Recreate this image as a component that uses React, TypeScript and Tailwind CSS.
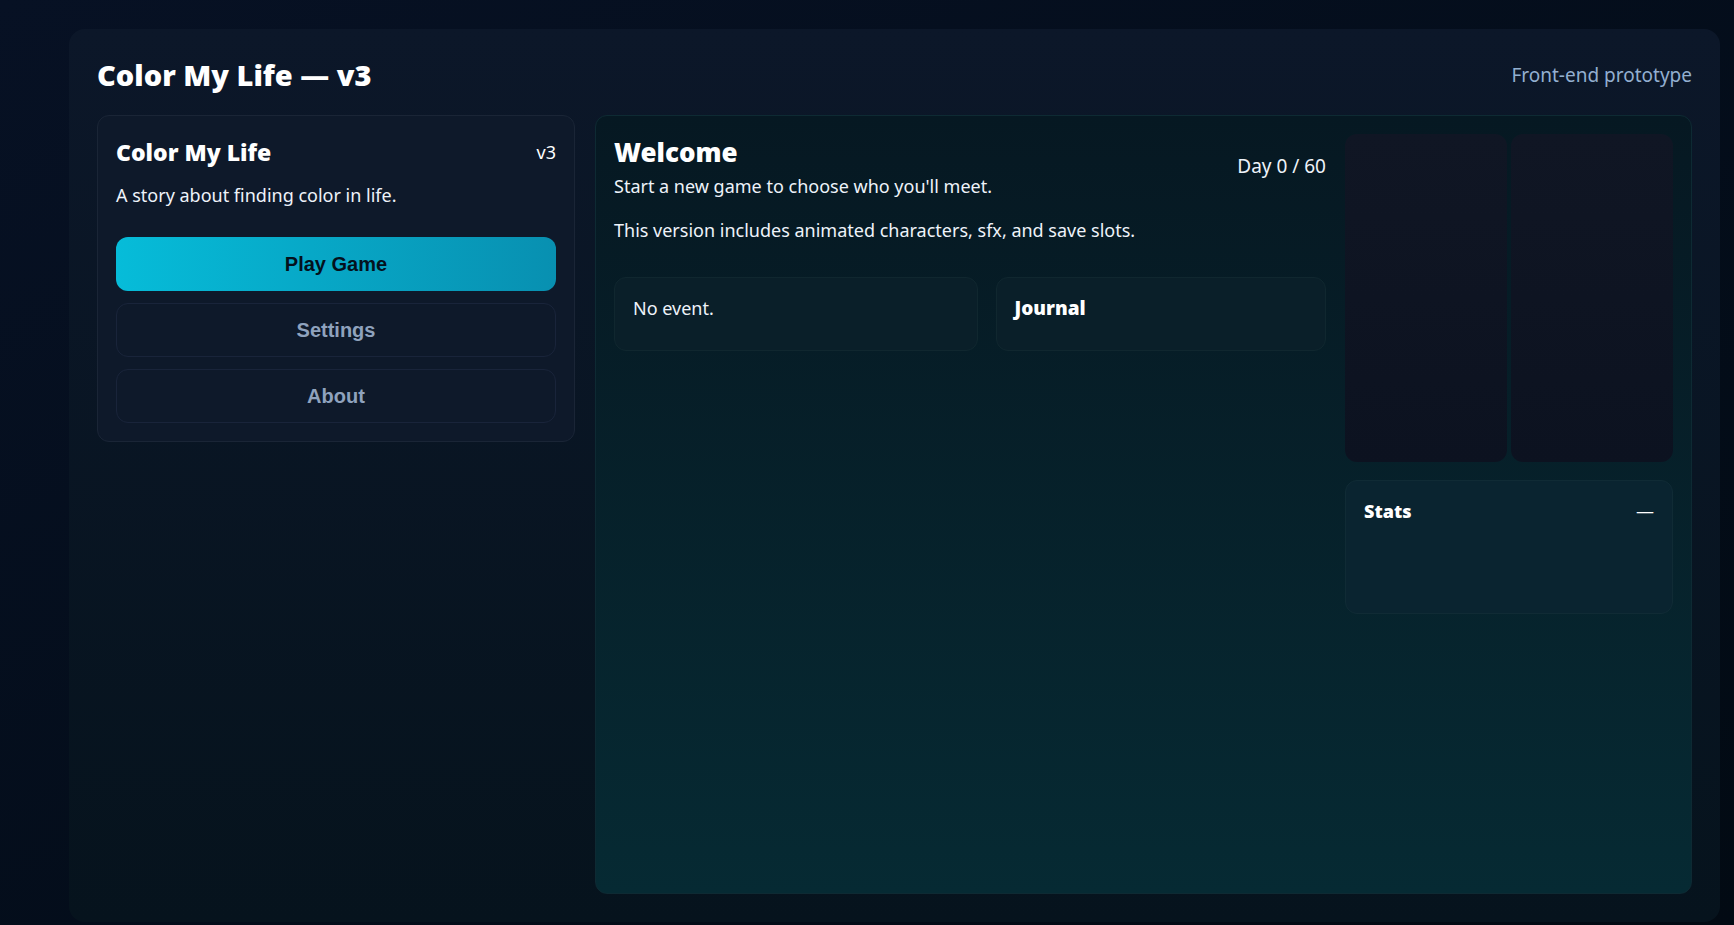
const sans = "font-['Segoe_UI','Noto_Sans',sans-serif]";
const btnFont = "font-['Liberation_Sans',Arial,sans-serif]";

function MenuButton({ label, primary }: { label: string; primary?: boolean }) {
  if (primary) {
    return (
      <button
        className={`${btnFont} h-[54px] w-full rounded-xl bg-linear-to-r from-[#06bcd9] to-[#0890b1] text-xl font-bold text-[#04111d]`}
      >
        {label}
      </button>
    );
  }
  return (
    <button
      className={`${btnFont} h-[54px] w-full rounded-xl border border-[#19243a] bg-transparent text-xl font-bold text-[#8fa2bd]`}
    >
      {label}
    </button>
  );
}

function MenuCard() {
  return (
    <div className="rounded-xl border border-[#1a2536] bg-[#0e192a] p-[18px]">
      <div className="flex h-9 items-center justify-between">
        <h2 className="text-[23px] font-black text-white">Color My Life</h2>
        <span className="text-lg text-white">v3</span>
      </div>
      <p className="mt-[13px] text-lg leading-6 text-[#eef3fa]">
        A story about finding color in life.
      </p>
      <div className="mt-[30px] flex flex-col gap-3">
        <MenuButton label="Play Game" primary />
        <MenuButton label="Settings" />
        <MenuButton label="About" />
      </div>
    </div>
  );
}

function SceneCard({ children }: { children: React.ReactNode }) {
  return (
    <div className="h-[74px] rounded-xl border border-[#10272f] bg-[#0a1f29] p-[18px] text-lg leading-6 text-[#eef3fa]">
      {children}
    </div>
  );
}

function GamePanel() {
  return (
    <div className="h-full rounded-xl border border-[#0e2a33] bg-linear-to-b from-[#061822] to-[#062a33] p-[18px]">
      <div className="grid grid-cols-[1fr_328px] items-start gap-[19px]">
        <div>
          <div className="flex items-center justify-between">
            <div>
              <h2 className="text-[26px] leading-9 font-black text-white">Welcome</h2>
              <p className="mt-1 text-lg leading-6 text-[#eef3fa]">
                Start a new game to choose who you'll meet.
              </p>
            </div>
            <span className="text-[19px] text-[#eef3fa]">Day 0 / 60</span>
          </div>
          <p className="mt-5 text-lg leading-6 text-[#eef3fa]">
            This version includes animated characters, sfx, and save slots.
          </p>
          <div className="mt-[35px] grid grid-cols-[1.1fr_1fr] gap-[18px]">
            <SceneCard>No event.</SceneCard>
            <SceneCard>
              <span className="text-[19px] font-black text-white">Journal</span>
            </SceneCard>
          </div>
        </div>

        <div>
          <div className="grid h-[328px] grid-cols-2 gap-1">
            <div className="rounded-xl bg-linear-to-b from-[#101624] to-[#0c1220]" />
            <div className="rounded-xl bg-linear-to-b from-[#101624] to-[#0c1220]" />
          </div>
          <div className="mt-[18px] h-[134px] rounded-xl border border-[#102b35] bg-[#0a2430] p-[18px]">
            <div className="flex items-center justify-between text-lg leading-6 text-white">
              <span className="font-black">Stats</span>
              <span>—</span>
            </div>
          </div>
        </div>
      </div>
    </div>
  );
}

export default function App() {
  return (
    <div
      className={`${sans} h-screen bg-linear-to-br from-[#071124] to-[#020a13] pt-[29px] pr-[14px] pb-[3px] pl-[69px]`}
    >
      <div className="flex h-full flex-col rounded-2xl bg-linear-to-b from-[#0c1729] to-[#06131d] p-7">
        <header className="flex h-[36px] items-center justify-between">
          <h1 className="text-[29px] leading-[36px] font-black text-white">
            Color My Life — v3
          </h1>
          <span className="text-[19px] text-[#93afd0]">Front-end prototype</span>
        </header>
        <div className="mt-[22px] grid flex-1 grid-cols-[478px_1fr] items-start gap-5">
          <MenuCard />
          <div className="h-full">
            <GamePanel />
          </div>
        </div>
      </div>
    </div>
  );
}
